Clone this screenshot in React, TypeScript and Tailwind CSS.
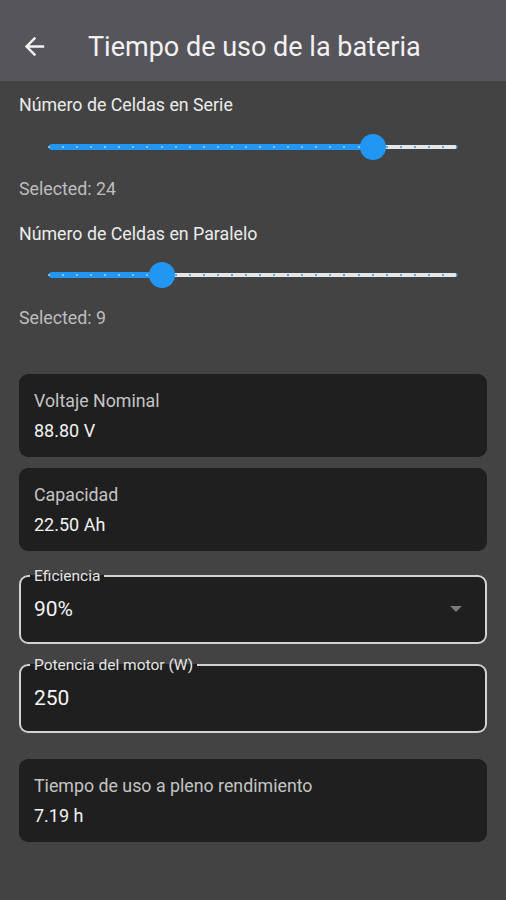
import React from "react";

const FONT = { fontFamily: "Roboto, 'Noto Sans', Arial, sans-serif" };

function Slider({ value, min = 1, max = 30 }: { value: number; min?: number; max?: number }) {
  const divisions = max - min;
  const pct = ((value - min) / divisions) * 100;
  const ticks = Array.from({ length: divisions + 1 }, (_, i) => i);
  return (
    <div className="h-[48px] px-[30px] flex items-center">
      <div className="relative w-full h-[6px]">
        <div className="absolute left-0 right-0 top-[1px] h-[4px] rounded-full bg-[#e6e6e6]" />
        <div
          className="absolute left-0 top-0 h-[6px] rounded-full bg-[#2196f3]"
          style={{ width: `${pct}%` }}
        />
        {ticks.map((i) => {
          const p = (i / divisions) * 100;
          const active = p <= pct;
          return (
            <div
              key={i}
              className={
                active
                  ? "absolute top-[2px] w-[2px] h-[2px] rounded-full bg-[#9fd0f8] -ml-[1px]"
                  : "absolute top-[2px] w-[2px] h-[2px] rounded-full bg-[#2196f3] -ml-[1px]"
              }
              style={{ left: `${p}%` }}
            />
          );
        })}
        <div
          className="absolute top-[3px] w-[26px] h-[26px] -ml-[13px] -mt-[13px] rounded-full bg-[#2196f3]"
          style={{ left: `${pct}%` }}
        />
      </div>
    </div>
  );
}

function InfoCard({ label, value }: { label: string; value: string }) {
  return (
    <div className="rounded-[9px] bg-[#1f1f1f] pl-[15px] pt-[17px] pb-[16px]">
      <div className="text-[17.8px] leading-[20px] text-[#c4c4c4]">{label}</div>
      <div className="mt-[10px] text-[18px] leading-[20px] text-[#f2f2f2]">{value}</div>
    </div>
  );
}

function OutlinedField({
  label,
  value,
  dropdown,
  className,
}: {
  label: string;
  value: string;
  dropdown?: boolean;
  className?: string;
}) {
  return (
    <fieldset
      className={
        "m-0 border-2 border-[#d2d2d2] rounded-[9px] bg-[#1f1f1f] pl-[9px] pr-[18px] pb-0 pt-0 " +
        (className ?? "")
      }
    >
      <legend className="px-[4px] text-[15.5px] leading-[16px] text-[#e6e6e6]">{label}</legend>
      <div className="h-[58px] flex items-center pl-[4px] pb-[8px]">
        <span className="flex-1 text-[21px] leading-[24px] text-[#f5f5f5]">{value}</span>
        {dropdown && (
          <svg width="12" height="6" viewBox="0 0 12 6" className="mr-[5px]">
            <path d="M0 0 L12 0 L6 6 Z" fill="#7a7a7a" />
          </svg>
        )}
      </div>
    </fieldset>
  );
}

export default function App() {
  return (
    <div className="w-[506px] h-[900px] bg-[#434343] overflow-hidden" style={FONT}>
      <header className="h-[81px] bg-[#57555c] flex items-center pt-[12px]">
        <div className="w-[88px] pl-[20px] flex items-center">
          <svg width="29" height="29" viewBox="0 0 24 24">
            <path
              d="M20 11H7.83l5.59-5.59L12 4l-8 8 8 8 1.41-1.41L7.83 13H20v-2z"
              fill="#f2f2f2"
            />
          </svg>
        </div>
        <h1 className="text-[27px] leading-[30px] text-[#f2f2f2] font-normal">
          Tiempo de uso de la bateria
        </h1>
      </header>
      <main className="px-[19px] pt-[14px]">
        <div className="text-[17.8px] leading-[20px] text-[#ececec]">Número de Celdas en Serie</div>
        <div className="mt-[8px]">
          <Slider value={24} />
        </div>
        <div className="mt-[8px] text-[17.8px] leading-[20px] text-[#bdbdbd]">Selected: 24</div>
        <div className="mt-[25px] text-[17.8px] leading-[20px] text-[#ececec]">
          Número de Celdas en Paralelo
        </div>
        <div className="mt-[7px]">
          <Slider value={9} />
        </div>
        <div className="mt-[9px] text-[17.8px] leading-[20px] text-[#bdbdbd]">Selected: 9</div>

        <div className="mt-[46px] flex flex-col gap-[11px]">
          <InfoCard label="Voltaje Nominal" value="88.80 V" />
          <InfoCard label="Capacidad" value="22.50 Ah" />
        </div>

        <OutlinedField className="mt-[17px]" label="Eficiencia" value="90%" dropdown />
        <OutlinedField className="mt-[13px]" label="Potencia del motor (W)" value="250" />

        <div className="mt-[26px]">
          <InfoCard label="Tiempo de uso a pleno rendimiento" value="7.19 h" />
        </div>
      </main>
    </div>
  );
}
